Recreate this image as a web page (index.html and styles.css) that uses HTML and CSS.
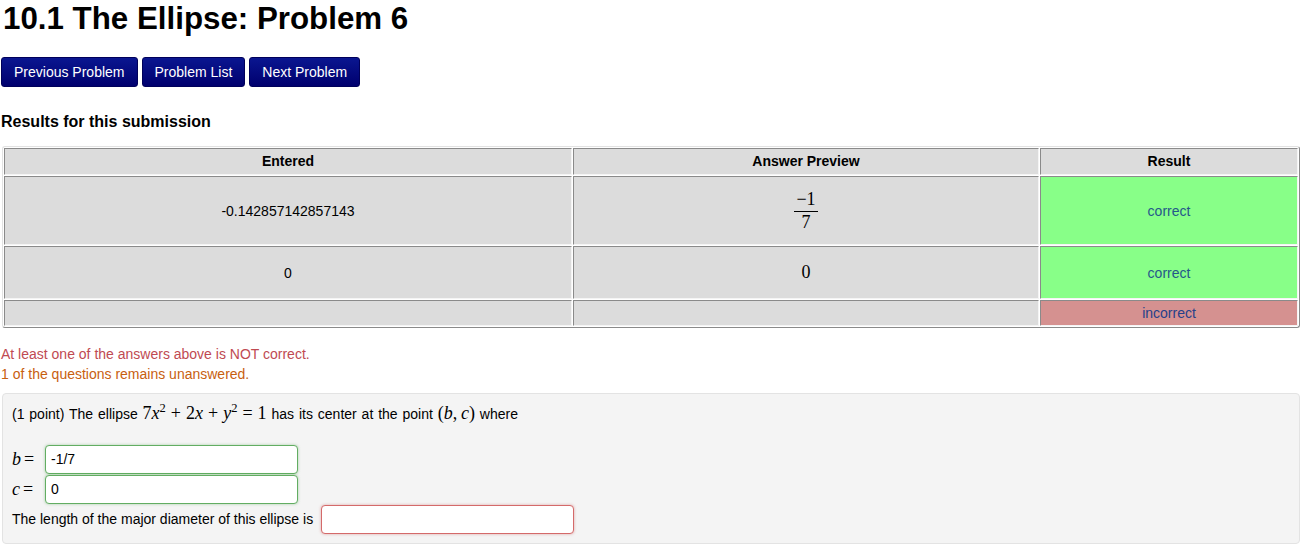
FILE: index.html
```html
<!DOCTYPE html>
<html>
<head>
<meta charset="utf-8">
<link rel="stylesheet" href="styles.css">
</head>
<body>
<h1 class="title">10.1 The Ellipse: Problem 6</h1>
<div class="nav">
  <button class="btn">Previous Problem</button>
  <button class="btn">Problem List</button>
  <button class="btn">Next Problem</button>
</div>
<h3 class="results-title">Results for this submission</h3>
<table class="results">
  <colgroup><col class="c1"><col class="c2"><col class="c3"></colgroup>
  <tr class="hdr"><th>Entered</th><th>Answer Preview</th><th>Result</th></tr>
  <tr class="r1">
    <td>-0.142857142857143</td>
    <td><span class="frac"><span class="num">&minus;1</span><span class="den">7</span></span></td>
    <td class="ok">correct</td>
  </tr>
  <tr class="r2">
    <td>0</td>
    <td><span class="m">0</span></td>
    <td class="ok">correct</td>
  </tr>
  <tr class="r3">
    <td></td>
    <td></td>
    <td class="bad">incorrect</td>
  </tr>
</table>
<div class="msgs">
  <div class="msg-err">At least one of the answers above is NOT correct.</div>
  <div class="msg-warn">1 of the questions remains unanswered.</div>
</div>
<div class="problem">
  <p class="statement">(1 point) The ellipse <span class="m">7<i>x</i><sup>2</sup><span class="op">+</span>2<i>x</i><span class="op">+</span><i>y</i><sup>2</sup><span class="op">=</span>1</span> has its center at the point <span class="m">(<i>b</i>,&thinsp;<i>c</i>)</span> where</p>
  <div class="row"><span class="m lbl"><i>b</i><span class="op">=</span></span><input class="ans good" value="-1/7"></div>
  <div class="row"><span class="m lbl"><i>c</i><span class="op">=</span></span><input class="ans good" value="0"></div>
  <div class="row"><span class="txt">The length of the major diameter of this ellipse is</span><input class="ans wrong" value=""></div>
</div>
</body>
</html>
```
FILE: styles.css
```css
body {
  margin: 0;
  padding: 0 1px;
  font-family: "Liberation Sans", Arial, sans-serif;
  font-size: 14px;
  color: #000;
  background: #fff;
}
.title {
  margin: 1px 0 0 2px;
  font-size: 31.3px;
  line-height: 36px;
  font-weight: bold;
}
.nav {
  display: flex;
  gap: 4px;
  margin-top: 20px;
}
.btn {
  height: 30px;
  padding: 0 12px;
  border: 1px solid #00005a;
  border-radius: 3px;
  background: linear-gradient(#0a1690, #00006e);
  color: #fff;
  font-family: "Liberation Sans", Arial, sans-serif;
  font-size: 14px;
}
.results-title {
  margin: 25px 0 0 0;
  font-size: 16px;
  line-height: 20px;
  font-weight: bold;
}
.results {
  margin: 14px 0 0 1px;
  width: 1298px;
  table-layout: fixed;
  border-collapse: separate;
  border-spacing: 1px;
  border: 1px solid;
  border-color: #e2e2e2 #8a8a8a #8a8a8a #e2e2e2;
  border-radius: 3px;
}
.c1 { width: 568px; }
.c2 { width: 466px; }
.c3 { width: 258px; }
.results th, .results td {
  background: #dcdcdc;
  border: 1px solid;
  border-color: #8a8a8a #f4f4f4 #f4f4f4 #8a8a8a;
  text-align: center;
  vertical-align: middle;
  padding: 0;
  font-size: 14px;
}
.results th { font-weight: bold; padding-bottom: 1px; }
.hdr th { height: 24px; }
.r1 td { height: 67px; }
.r2 td { height: 51px; }
.r3 td { height: 24px; }
.results td.ok { background: #88ff88; color: #25588a; }
.results td.bad { background: #d59190; color: #26408a; }
.m {
  font-family: "Liberation Serif", "Times New Roman", serif;
  font-size: 18px;
}
.m sup { font-size: 12.5px; line-height: 0; }
.op { margin: 0 5px; }
.frac {
  display: inline-flex;
  flex-direction: column;
  align-items: center;
  font-family: "Liberation Serif", "Times New Roman", serif;
  font-size: 18px;
  line-height: 19px;
  padding-top: 1px;
}
.frac .num {
  border-bottom: 1px solid #000;
  padding: 0 2px 2px;
}
.frac .den { padding-top: 1px; }
.msgs {
  margin-top: 16px;
  line-height: 20px;
}
.msg-err { color: #c04a52; }
.msg-warn { color: #c8600f; }
.problem {
  margin-top: 9px;
  margin-left: 1px;
  width: 1298px;
  box-sizing: border-box;
  height: 151px;
  background: #f4f4f4;
  border: 1px solid #e3e3e3;
  border-radius: 4px;
  padding: 9px 9px;
}
.statement {
  margin: 0 0 20px 0;
  line-height: 20px;
  word-spacing: 1px;
}
.row {
  display: flex;
  align-items: center;
  height: 30px;
}
.lbl {
  width: 33px;
  font-size: 18px;
}
.lbl .op { margin: 0 0 0 3px; }
.txt { margin-right: 8px; }
.ans {
  width: 253px;
  height: 29px;
  box-sizing: border-box;
  border-radius: 4px;
  background: #fff;
  padding: 0 5px;
  font-family: "Liberation Sans", Arial, sans-serif;
  font-size: 14px;
  color: #000;
  outline: none;
}
.ans.good {
  border: 1px solid #62ad62;
  box-shadow: 0 0 3px rgba(70, 160, 70, 0.45);
}
.ans.wrong {
  border: 1px solid #d46a6a;
  box-shadow: 0 0 3px rgba(200, 70, 70, 0.45);
}
```
